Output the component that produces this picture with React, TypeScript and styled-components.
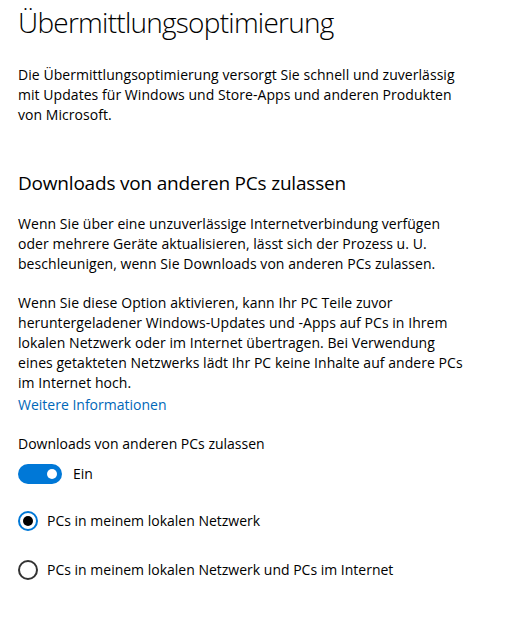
import { createGlobalStyle } from "styled-components";
import styled from "styled-components";

const GlobalStyle = createGlobalStyle`
  body {
    margin: 0;
    background: #ffffff;
    font-family: "Open Sans", "Liberation Sans", sans-serif;
    color: #000000;
  }
`;

const Page = styled.div`
  padding: 0 18px;
  display: flex;
  flex-direction: column;
`;

const Title = styled.h1`
  margin: 4px 0 0;
  font-size: 28px;
  font-weight: 300;
  line-height: 36px;
  letter-spacing: -0.75px;
`;

const Text = styled.p<{ $top: number }>`
  margin: ${(p) => p.$top}px 0 0;
  font-size: 14px;
  line-height: 20px;
  letter-spacing: 0.05px;
`;

const Heading = styled.h2`
  margin: 44px 0 0;
  font-size: 19px;
  font-weight: 400;
  line-height: 28px;
  letter-spacing: -0.2px;
`;

const Link = styled.a`
  display: block;
  color: #0067b8;
  text-decoration: none;
  font-size: 14px;
  line-height: 20px;
  margin-top: 2px;
`;

const Label = styled.div`
  margin-top: 19px;
  font-size: 14px;
  line-height: 20px;
`;

const ToggleRow = styled.div`
  display: flex;
  align-items: center;
  gap: 11px;
  margin-top: 10px;
  font-size: 14px;
  line-height: 20px;
`;

const Toggle = styled.div<{ $on: boolean }>`
  width: 44px;
  height: 20px;
  border-radius: 10px;
  background: ${(p) => (p.$on ? "#0078d7" : "#ffffff")};
  display: flex;
  align-items: center;
  justify-content: ${(p) => (p.$on ? "flex-end" : "flex-start")};
  padding: 0 5px;
  box-sizing: border-box;
`;

const Knob = styled.div`
  width: 10px;
  height: 10px;
  border-radius: 50%;
  background: #ffffff;
`;

const RadioList = styled.div`
  display: flex;
  flex-direction: column;
  gap: 29px;
  margin-top: 27px;
`;

const RadioRow = styled.label`
  display: flex;
  align-items: center;
  gap: 9px;
  font-size: 14px;
  line-height: 20px;
`;

const RadioCircle = styled.span<{ $checked: boolean }>`
  width: 20px;
  height: 20px;
  box-sizing: border-box;
  border-radius: 50%;
  border: 2px solid ${(p) => (p.$checked ? "#0078d7" : "#333333")};
  display: flex;
  align-items: center;
  justify-content: center;
  &::after {
    content: "";
    display: ${(p) => (p.$checked ? "block" : "none")};
    width: 10px;
    height: 10px;
    border-radius: 50%;
    background: #000000;
  }
`;

const App = () => {
  return (
    <Page>
      <GlobalStyle />
      <Title>Übermittlungsoptimierung</Title>
      <Text $top={25}>
        Die Übermittlungsoptimierung versorgt Sie schnell und zuverlässig
        <br />
        mit Updates für Windows und Store-Apps und anderen Produkten
        <br />
        von Microsoft.
      </Text>
      <Heading>Downloads von anderen PCs zulassen</Heading>
      <Text $top={17}>
        Wenn Sie über eine unzuverlässige Internetverbindung verfügen
        <br />
        oder mehrere Geräte aktualisieren, lässt sich der Prozess u. U.
        <br />
        beschleunigen, wenn Sie Downloads von anderen PCs zulassen.
      </Text>
      <Text $top={19}>
        Wenn Sie diese Option aktivieren, kann Ihr PC Teile zuvor
        <br />
        heruntergeladener Windows-Updates und -Apps auf PCs in Ihrem
        <br />
        lokalen Netzwerk oder im Internet übertragen. Bei Verwendung
        <br />
        eines getakteten Netzwerks lädt Ihr PC keine Inhalte auf andere PCs
        <br />
        im Internet hoch.
      </Text>
      <Link href="#">Weitere Informationen</Link>
      <Label>Downloads von anderen PCs zulassen</Label>
      <ToggleRow>
        <Toggle $on>
          <Knob />
        </Toggle>
        Ein
      </ToggleRow>
      <RadioList>
        <RadioRow>
          <RadioCircle $checked />
          PCs in meinem lokalen Netzwerk
        </RadioRow>
        <RadioRow>
          <RadioCircle $checked={false} />
          PCs in meinem lokalen Netzwerk und PCs im Internet
        </RadioRow>
      </RadioList>
    </Page>
  );
};

export default App;
